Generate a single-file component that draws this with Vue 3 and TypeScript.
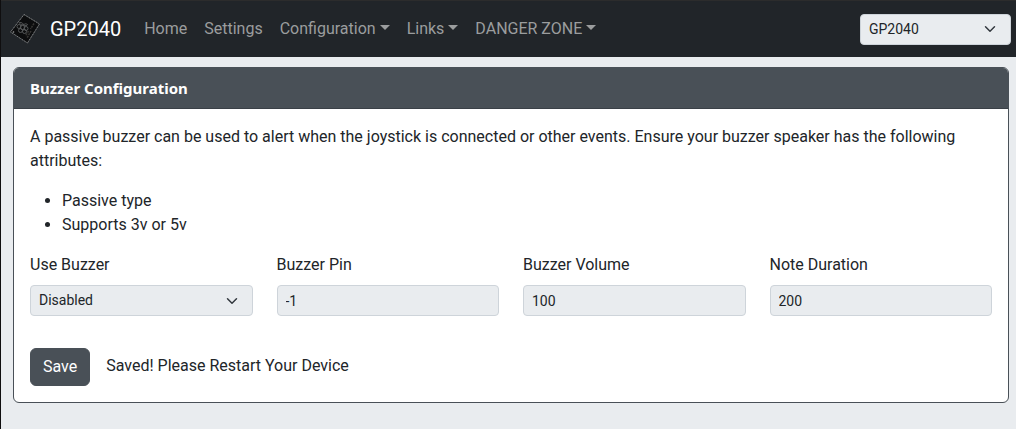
<script setup lang="ts">
import { ref } from 'vue'

interface NavItem {
  label: string
  dropdown: boolean
}

const navItems: NavItem[] = [
  { label: 'Home', dropdown: false },
  { label: 'Settings', dropdown: false },
  { label: 'Configuration', dropdown: true },
  { label: 'Links', dropdown: true },
  { label: 'DANGER ZONE', dropdown: true },
]

const attributes = ['Passive type', 'Supports 3v or 5v']

const boardLabel = ref('GP2040')
const buzzerEnabled = ref('Disabled')
const numberFields = ref([
  { id: 'buzzerPin', label: 'Buzzer Pin', value: '-1' },
  { id: 'buzzerVolume', label: 'Buzzer Volume', value: '100' },
  { id: 'noteDuration', label: 'Note Duration', value: '200' },
])
const saveMessage = ref('Saved! Please Restart Your Device')

function save() {
  saveMessage.value = 'Saved! Please Restart Your Device'
}
</script>

<template>
  <div class="page">
    <header class="navbar">
      <a class="brand" href="#">
        <svg class="logo" viewBox="0 0 30 30" aria-hidden="true">
          <path d="M14 0.500L29.500 10L17.500 29L0.500 18Z" fill="#0c0d0e" stroke="#3c3e40" stroke-width="1" />
          <path d="M14 0.500L29.500 10L17.500 29L0.500 18Z" fill="none" stroke="#85888a" stroke-width="1" stroke-dasharray="1 1" />
          <g fill="none" stroke="#5a5c5e" stroke-width="0.900">
            <circle cx="12.500" cy="13.500" r="2.200" />
            <circle cx="9" cy="12.500" r="2" />
            <circle cx="16" cy="14.500" r="2" />
            <circle cx="10.500" cy="16.500" r="2" />
            <circle cx="14.500" cy="17.500" r="2" />
            <path d="M13.500 11C11 11 9.500 10 9.500 8.500C12 8.500 13 9 13.500 11C14.500 9.500 16 9.500 17.500 10.500C17 12 15.500 12 13.500 11Z" />
          </g>
          <path d="M24 9.500L20.500 15M21 17L17 24M18.500 17L15.500 22" fill="none" stroke="#383735" stroke-width="1.500" stroke-dasharray="2 0.800" />
          <circle cx="3.500" cy="18" r="0.800" fill="#a0a1a2" />
        </svg>
        <span>GP2040</span>
      </a>
      <nav class="nav">
        <a v-for="item in navItems" :key="item.label" class="nav-link" href="#">
          {{ item.label }}<span v-if="item.dropdown" class="caret"></span>
        </a>
      </nav>
      <select v-model="boardLabel" class="control select board-select" aria-label="Button labels">
        <option>GP2040</option>
      </select>
    </header>

    <main class="content">
      <section class="card">
        <h1 class="card-header">Buzzer Configuration</h1>
        <form class="card-body" @submit.prevent="save">
          <p class="intro">
            A passive buzzer can be used to alert when the joystick is connected or other events.
            Ensure your buzzer speaker has the following attributes:
          </p>
          <ul class="attributes">
            <li v-for="attribute in attributes" :key="attribute">{{ attribute }}</li>
          </ul>
          <div class="fields">
            <div class="field">
              <label for="useBuzzer">Use Buzzer</label>
              <select id="useBuzzer" v-model="buzzerEnabled" class="control select">
                <option>Disabled</option>
                <option>Enabled</option>
              </select>
            </div>
            <div v-for="field in numberFields" :key="field.id" class="field">
              <label :for="field.id">{{ field.label }}</label>
              <input :id="field.id" v-model="field.value" class="control" type="text" inputmode="numeric" />
            </div>
          </div>
          <div class="actions">
            <button class="save" type="submit">Save</button>
            <span class="message" role="status">{{ saveMessage }}</span>
          </div>
        </form>
      </section>
    </main>
  </div>
</template>

<style>
body {
  background: #e9ecef;
}
</style>

<style scoped>
.page,
.page * {
  box-sizing: border-box;
}

.page {
  min-height: 100vh;
  border-left: 1px solid #0f0e0f;
  background: #e9ecef;
  color: #212529;
  font-family: Roboto, "Noto Sans", sans-serif;
  font-size: 16px;
  line-height: 24px;
}

.navbar {
  display: flex;
  align-items: center;
  min-height: 57px;
  padding: 0 5px 0 9px;
  border-top: 1px solid #2c2c2c;
  background: #212529;
}

.brand {
  display: flex;
  align-items: center;
  gap: 10px;
  margin-right: 15px;
  color: #fff;
  font-size: 20px;
  line-height: 30px;
  text-decoration: none;
}

.logo {
  width: 30px;
  height: 30px;
}

.nav {
  display: flex;
  flex: 1;
  gap: 1px;
}

.nav-link {
  padding: 8px;
  color: #9b9d9e;
  text-decoration: none;
  white-space: nowrap;
}

.caret {
  display: inline-block;
  margin-left: 4px;
  border: 5px solid transparent;
  border-top-color: currentColor;
  border-bottom: 0;
  vertical-align: 4px;
}

.content {
  padding: 10px 7px 26px 12px;
}

.card {
  overflow: hidden;
  border: 1px solid #495057;
  border-radius: 6px;
  background: #fff;
}

.card-header {
  margin: 0;
  padding: 8px 16px;
  border-bottom: 1px solid #3a4047;
  background: #495057;
  color: #fff;
  font-family: "Noto Sans", sans-serif;
  font-size: 15px;
  font-weight: 700;
  line-height: 24px;
}

.card-body {
  padding: 16px;
}

.intro {
  margin: 0 0 16px;
}

.attributes {
  margin: 0 0 16px;
  padding-left: 32px;
}

.fields {
  display: grid;
  grid-template-columns: repeat(4, minmax(0, 1fr));
  gap: 24px;
  margin-bottom: 32px;
}

.field {
  display: flex;
  flex-direction: column;
  gap: 8px;
}

.control {
  width: 100%;
  height: 31px;
  margin: 0;
  padding: 4px 8px;
  border: 1px solid #ced4da;
  border-radius: 4px;
  background-color: #e9ecef;
  color: #212529;
  font-family: inherit;
  font-size: 14px;
  line-height: 21px;
}

.select {
  appearance: none;
  padding-right: 36px;
  background-image: url("data:image/svg+xml,%3csvg xmlns='http://www.w3.org/2000/svg' viewBox='0 0 16 16'%3e%3cpath fill='none' stroke='%23343a40' stroke-linecap='round' stroke-linejoin='round' stroke-width='2' d='m2 5 6 6 6-6'/%3e%3c/svg%3e");
  background-position: right 12px center;
  background-repeat: no-repeat;
  background-size: 16px 12px;
}

.board-select {
  width: 151px;
}

.actions {
  display: flex;
  align-items: flex-start;
  gap: 16px;
}

.save {
  padding: 6px 12px;
  border: 1px solid #495057;
  border-radius: 6px;
  background: #495057;
  color: #fff;
  font-family: inherit;
  font-size: 16px;
  line-height: 24px;
}

.message {
  padding: 6px 0;
}
</style>
